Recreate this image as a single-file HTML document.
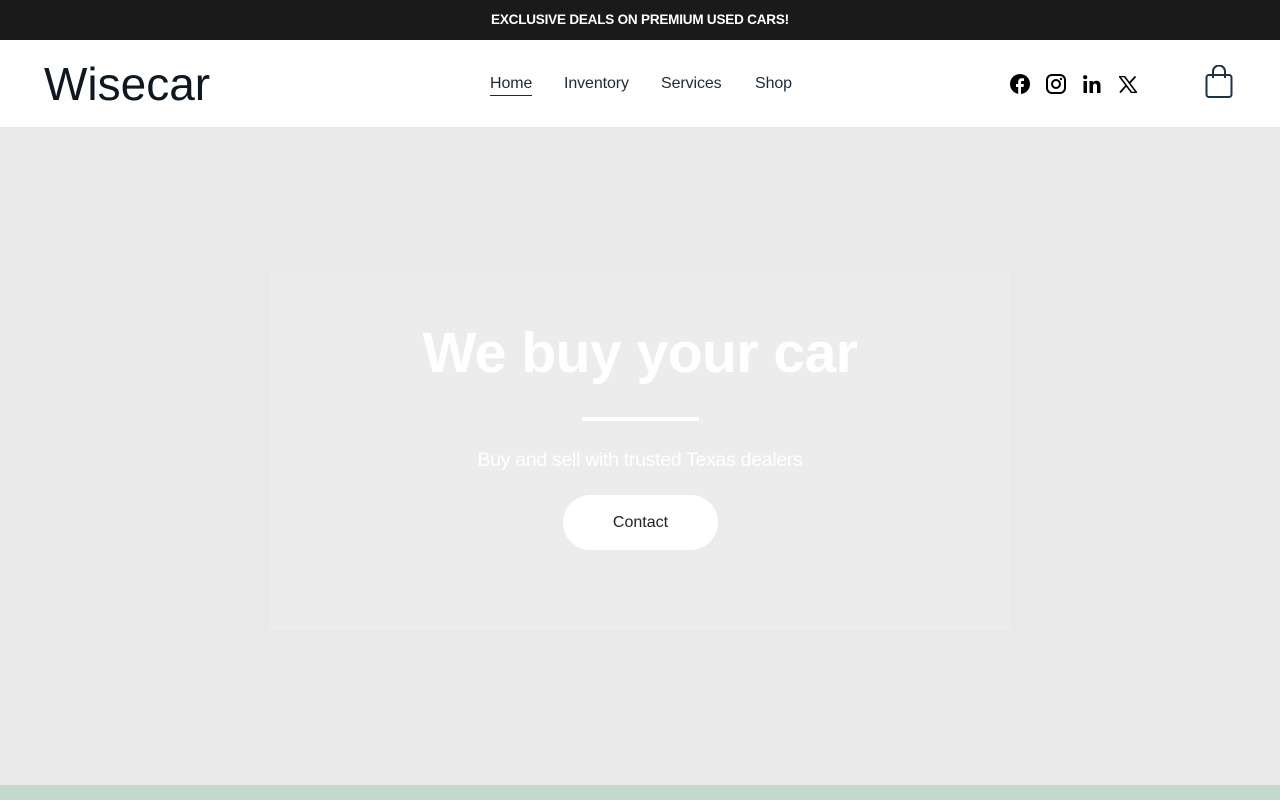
<!DOCTYPE html>
<html><head><style>
*{margin:0;padding:0;box-sizing:border-box}
body{width:1280px;height:800px;overflow:hidden;font-family:"Liberation Sans",sans-serif;background:#e9e9e9;position:relative}
.top{position:absolute;top:0;left:0;width:1280px;height:40px;background:#1a1a1a;color:#fff;font-size:13.5px;font-weight:bold;text-align:center;line-height:40px;letter-spacing:-0.2px}
.hdr{position:absolute;top:40px;left:0;width:1280px;height:87px;background:#fff}
.logo{position:absolute;left:44px;top:16px;font-size:46px;color:#0f1720;line-height:56px}
.nav{position:absolute;top:35px;font-size:16px;color:#1a2a3a;letter-spacing:-0.1px}
.hero{position:absolute;top:127px;left:0;width:1280px;height:658px;background:#e9e9e9}
.box{position:absolute;left:270px;top:271px;width:740px;height:359px;background:#ececec}
h1{position:absolute;top:318px;width:1280px;text-align:center;color:#fff;font-size:57px;font-weight:bold;line-height:70px;letter-spacing:-0.5px}
.line{position:absolute;left:582px;top:417px;width:117px;height:4px;background:#fff}
.sub{position:absolute;top:449px;width:1280px;text-align:center;color:#fff;font-size:19.5px;letter-spacing:-0.3px}
.btn{position:absolute;left:563px;top:495px;width:155px;height:55px;border-radius:28px;background:#fff;text-align:center;line-height:55px;font-size:16px;color:#222}
.foot{position:absolute;top:785px;left:0;width:1280px;height:15px;background:#c5d9d1}
</style></head><body>
<div class="top">EXCLUSIVE DEALS ON PREMIUM USED CARS!</div>
<div class="hdr">
<div class="logo">Wisecar</div>
<div class="nav" style="left:490px;border-bottom:1px solid #1a2a3a;padding-bottom:2px">Home</div>
<div class="nav" style="left:564px">Inventory</div>
<div class="nav" style="left:661px">Services</div>
<div class="nav" style="left:755px">Shop</div>
<svg style="position:absolute;left:1010px;top:34px" width="20" height="20" viewBox="0 0 20 20"><circle cx="10" cy="10" r="10" fill="#000"/><path d="M11 20v-7h2.5l.4-3H11V8.3c0-.8.3-1.3 1.4-1.3H14V4.3c-.3 0-1.2-.1-2.2-.1-2.2 0-3.6 1.3-3.6 3.7V10H6v3h2.2v7z" fill="#fff"/></svg>
<svg style="position:absolute;left:1046px;top:34px" width="20" height="20" viewBox="0 0 20 20"><rect x="1" y="1" width="18" height="18" rx="5" fill="none" stroke="#000" stroke-width="2"/><circle cx="10" cy="10" r="4" fill="none" stroke="#000" stroke-width="2"/><circle cx="15" cy="5" r="1.2" fill="#000"/></svg>
<svg style="position:absolute;left:1083px;top:35px" width="18" height="18" viewBox="0 0 18 18"><rect x="0.5" y="6" width="3.5" height="12" fill="#000"/><circle cx="2.2" cy="2.2" r="2.1" fill="#000"/><path d="M6.5 6h3.3v1.7C10.5 6.5 11.8 5.7 13.4 5.7 16.4 5.7 17.5 7.6 17.5 10.6V18H14v-6.6c0-1.6-.4-2.8-1.9-2.8-1.6 0-2.1 1.2-2.1 2.8V18H6.5z" fill="#000"/></svg>
<svg style="position:absolute;left:1119px;top:36px" width="18" height="17" viewBox="0 0 18 17"><path d="M0.5 0.5h5l12 16h-5z" fill="none" stroke="#000" stroke-width="1.6"/><path d="M16.5 0.5L10.5 7M1 16.5l6-6.7" stroke="#000" stroke-width="1.8"/></svg>
<svg style="position:absolute;left:1205px;top:25px" width="28" height="34" viewBox="0 0 28 34"><rect x="1.5" y="10" width="25" height="22" rx="2.5" fill="none" stroke="#1d3247" stroke-width="2"/><path d="M8 13V6.5a6 6 0 0 1 12 0V13" fill="none" stroke="#1d3247" stroke-width="2"/></svg>
</div>
<div class="hero"></div>
<div class="box"></div>
<h1>We buy your car</h1>
<div class="line"></div>
<div class="sub">Buy and sell with trusted Texas dealers</div>
<div class="btn">Contact</div>
<div class="foot"></div>
</body></html>
